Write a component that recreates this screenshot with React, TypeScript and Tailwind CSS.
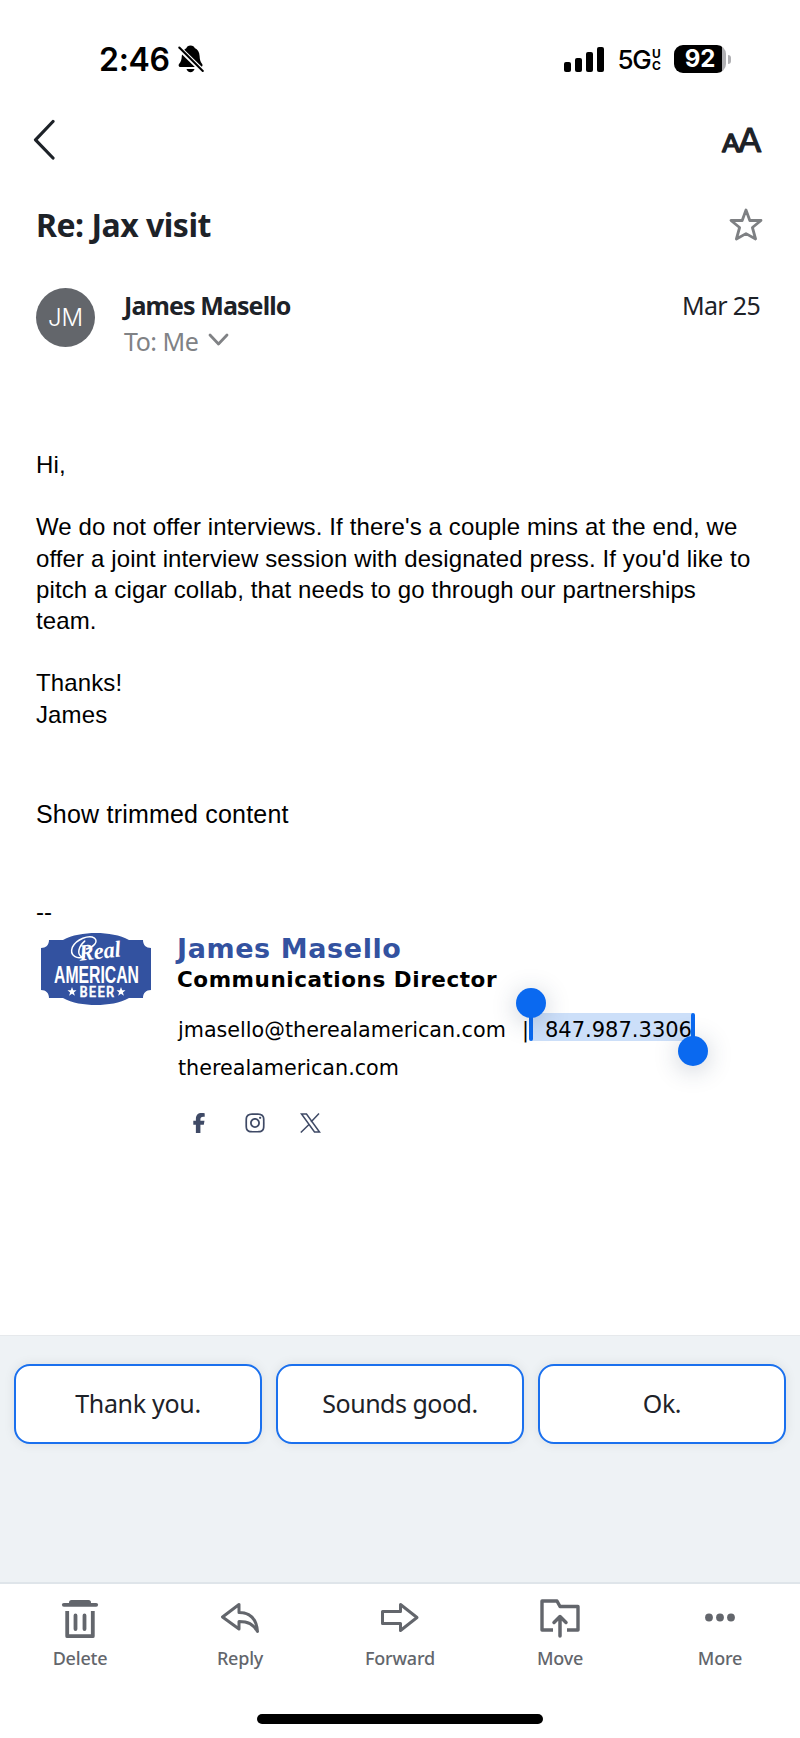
import React from 'react';
import { FaFacebookF, FaInstagram } from 'react-icons/fa6';

const quickReplies = [
  { text: 'Thank you.', tracking: 'tracking-[-0.3px]' },
  { text: 'Sounds good.', tracking: 'tracking-[-0.5px]' },
  { text: 'Ok.', tracking: 'tracking-[-0.4px]' },
];

const actions = [
  { label: 'Delete', icon: <TrashIcon /> },
  { label: 'Reply', icon: <ReplyIcon /> },
  { label: 'Forward', icon: <ForwardIcon /> },
  { label: 'Move', icon: <MoveIcon /> },
  { label: 'More', icon: <MoreIcon /> },
];

function BellOffIcon() {
  return (
    <svg width="26" height="28" viewBox="0 0 26 28">
      <path
        d="M12.5 0.500c2.300 0 3.800 1.200 4.200 2.600 3 1.300 4.700 3.900 4.900 7.900.2 4 .8 5.700 2.400 7.700 1 1.200.6 3.200-1 3.200H2.200c-1.600 0-2.100-1.900-1-3.200C3 16.700 3.600 15 3.800 11c.2-3.500 1.700-6.100 4.700-7.900C8.900 1.700 10.200.5 12.500.5z"
        fill="#000"
      />
      <path d="M8.500 24h8c-.5 2-2 3.200-4 3.200s-3.500-1.200-4-3.200z" fill="#000" />
      <path d="M.5 2.500 25 26.500" stroke="#fff" strokeWidth="5" />
      <path d="M1.300 2.500 24.800 26" stroke="#000" strokeWidth="2" strokeLinecap="round" />
    </svg>
  );
}

function SignalIcon() {
  return (
    <svg width="40" height="25" viewBox="0 0 40 25" fill="#000">
      <rect x="0" y="15" width="7" height="10" rx="2" />
      <rect x="11" y="11" width="7" height="14" rx="2" />
      <rect x="22" y="5" width="7" height="20" rx="2" />
      <rect x="33" y="0" width="7" height="25" rx="2" />
    </svg>
  );
}

function Battery() {
  return (
    <div className="flex items-center">
      <div className="flex h-[28px] w-[52px] items-center overflow-hidden rounded-[9px] bg-[linear-gradient(to_right,#000_48px,#b0b0b3_48px)]">
        <span className="w-[52px] text-center font-['Inter'] text-[24px] leading-none font-bold text-white">92</span>
      </div>
      <div className="ml-[2px] h-[9px] w-[3px] rounded-r-full bg-[#b0b0b3]" />
    </div>
  );
}

function StatusBar() {
  return (
    <div className="flex h-[118px] items-center justify-between pr-[69px] pl-[99px]">
      <div className="flex items-center">
        <span className="w-[79px] pt-[2px] font-['Inter'] text-[32px] leading-none font-semibold tracking-[-0.3px] text-black">
          2:46
        </span>
        <BellOffIcon />
      </div>
      <div className="flex items-center">
        <SignalIcon />
        <span className="ml-[14px] pt-[2px] font-['Inter'] text-[26px] leading-none font-medium tracking-[-1.500px] text-black">
          5G
        </span>
        <span className="mr-[13px] ml-[2px] flex flex-col pt-[2px] font-['Inter'] text-[12px] leading-[12px] font-bold text-black">
          <span>U</span>
          <span>C</span>
        </span>
        <Battery />
      </div>
    </div>
  );
}

function NavBar() {
  return (
    <div className="flex h-[62px] justify-between pr-[38px] pl-[32px]">
      <svg width="24" height="42" viewBox="0 0 24 42" fill="none">
        <path d="M21 3.500 3.500 21.800 21 40" stroke="#1d2228" strokeWidth="3.200" strokeLinecap="round" strokeLinejoin="round" />
      </svg>
      <svg
        width="42"
        height="42"
        viewBox="0 0 42 42"
        className="overflow-visible font-['Inter'] font-normal"
        fill="#1d2228"
        stroke="#1d2228"
        strokeLinejoin="round"
      >
        <text x="1.500" y="33.500" fontSize="24" strokeWidth="1.300" textLength="19" lengthAdjust="spacingAndGlyphs">A</text>
        <text x="17.500" y="33.500" fontSize="32" strokeWidth="1" textLength="24.500" lengthAdjust="spacingAndGlyphs">A</text>
      </svg>
    </div>
  );
}

function MessageHeader() {
  return (
    <>
      <div className="flex h-[90px] items-center justify-between pr-[37px] pl-[36px]">
        <h1 className="font-['Noto_Sans'] text-[32px] leading-none font-bold tracking-[-0.5px]">Re: Jax visit</h1>
        <svg width="34" height="33" viewBox="0 0 34 33" fill="none" className="mb-[2px]">
          <path
            d="M17 2 20.800 12.500H32L23.400 19.500 26.600 31 17 25.600 7.400 31l3.200-11.500L2 12.500H13.200z"
            stroke="#7e8083"
            strokeWidth="2.800"
            strokeLinejoin="round"
          />
        </svg>
      </div>
      <div className="flex h-[170px] pt-[17px] pr-[40px] pl-[36px]">
        <div className="mt-px flex size-[59px] items-center justify-center rounded-full bg-[#63666b] font-['Inter'] text-[24px] font-light text-white">
          JM
        </div>
        <div className="ml-[29px] flex-1 font-['Noto_Sans'] text-[25px]">
          <div className="leading-[36px] font-bold tracking-[-0.9px]">James Masello</div>
          <div className="flex items-center gap-[10px] leading-[36px] tracking-[-0.5px] text-[#808285]">
            To: Me
            <svg width="21" height="13" viewBox="0 0 21 13" fill="none" className="mb-[4px]">
              <path d="M2 2l8.500 9L19 2" stroke="#808285" strokeWidth="2.800" strokeLinecap="round" strokeLinejoin="round" />
            </svg>
          </div>
        </div>
        <div className="font-['Noto_Sans'] text-[25px] leading-[36px] tracking-[-0.7px]">Mar 25</div>
      </div>
    </>
  );
}

function MessageBody() {
  return (
    <div className="h-[481px] pl-[36px] font-['Liberation_Sans'] text-[24px] leading-[31.250px] tracking-[0.12px] whitespace-nowrap text-black">
      <p>Hi,</p>
      <p className="mt-[31px]">
        We do not offer interviews. If there's a couple mins at the end, we
        <br />
        offer a joint interview session with designated press. If you'd like to
        <br />
        pitch a cigar collab, that needs to go through our partnerships
        <br />
        team.
      </p>
      <p className="mt-[31px]">
        Thanks!
        <br />
        James
      </p>
      <p className="mt-[69px] text-[25px] tracking-[0.2px]">Show trimmed content</p>
      <p className="mt-[66px]">--</p>
    </div>
  );
}

function Logo() {
  return (
    <svg width="110" height="72" viewBox="0 0 110 72" fill="#fff" className="overflow-visible">
      <path
        d="M8 7H22C31 2 43 0 55 0s24 2 33 7h14c0 5 3 8 8 8v42c-5 0-8 3-8 8H88c-9 5-21 7-33 7s-24-2-33-7H8c0-5-3-8-8-8V15c5 0 8-3 8-8z"
        fill="#3352a0"
      />
      <g transform="rotate(-6 55 20)">
        <path
          d="M43 22C36 25 28 20 32 12 37 4 50 1 55 5 59 9 53 14 46 15M45 7c-7 5-9 12-5 15"
          fill="none"
          stroke="#fff"
          strokeWidth="1.500"
          strokeLinecap="round"
        />
        <text x="38" y="26" fontSize="23" textLength="42" lengthAdjust="spacingAndGlyphs" className="font-['Liberation_Serif'] font-bold italic">
          Real
        </text>
      </g>
      <text x="13" y="49.500" fontSize="24.500" textLength="85" lengthAdjust="spacingAndGlyphs" className="font-['Liberation_Sans'] font-bold">
        AMERICAN
      </text>
      <text
        x="38.500"
        y="63.500"
        fontSize="15"
        stroke="#fff"
        strokeWidth="0.600"
        textLength="34.500"
        lengthAdjust="spacing"
        className="font-['Roboto_Condensed','Roboto']"
      >
        BEER
      </text>
      <path d="M31 54l1.200 3.200h3.300l-2.600 2.200 1 3.300-2.900-1.900-2.900 1.900 1-3.300-2.600-2.200h3.300z" />
      <path d="M80 54l1.200 3.200h3.300l-2.600 2.200 1 3.300-2.900-1.900-2.900 1.900 1-3.300-2.600-2.200h3.300z" />
    </svg>
  );
}

function XIcon() {
  return (
    <svg width="21" height="20" viewBox="0 0 21 20" fill="none" stroke="#3f4a66" strokeWidth="1.500" className="ml-[34px]">
      <path d="M1.500 1h5l13 18h-5zM19 .5l-8 8.500M9 11.500.8 19.500" />
    </svg>
  );
}

function Signature() {
  return (
    <div className="flex h-[405px] pt-[3px] pl-[41px] font-['DejaVu_Sans'] whitespace-nowrap text-black">
      <Logo />
      <div className="ml-[26px]">
        <div className="text-[27px] leading-[32px] font-bold tracking-[0.6px] text-[#3352a0]">James Masello</div>
        <div className="text-[21.500px] leading-[30px] font-bold tracking-[0.55px]">Communications Director</div>
        <div className="mt-[18px] flex h-[28px] pl-px text-[20.700px] leading-[34px]">
          <span className="w-[344px]">jmasello@therealamerican.com</span>
          <span className="w-[9px]">|</span>
          <span className="relative h-[28px] w-[162px] bg-[#ccdff9] pl-[14px] text-[21px]">
            847.987.3306
            {/* Selection handles */}
            <span className="absolute top-0 left-[-2px] h-[28px] w-[4px] rounded-full bg-[#0a69f0]" />
            <span className="absolute top-[-25px] left-[-15px] size-[30px] rounded-full bg-[#0a69f0] shadow-[0_4px_24px_rgba(40,60,90,0.25)]" />
            <span className="absolute top-0 right-[-2px] h-[28px] w-[4px] rounded-full bg-[#0a69f0]" />
            <span className="absolute top-[23px] right-[-15px] size-[30px] rounded-full bg-[#0a69f0] shadow-[0_4px_24px_rgba(40,60,90,0.25)]" />
          </span>
        </div>
        <div className="mt-[12px] pl-px text-[20.700px] leading-[30px]">therealamerican.com</div>
        <div className="mt-[29px] flex items-center pl-[12px] text-[#3f4a66]">
          <FaFacebookF size={20} />
          <FaInstagram size={22} className="ml-[35px]" />
          <XIcon />
        </div>
      </div>
    </div>
  );
}

function QuickReplies() {
  return (
    <div className="h-[247px] border-t border-[#e6e9ec] bg-[#eef2f5] px-[14px] pt-[28px]">
      <div className="grid grid-cols-3 gap-[14px]">
        {quickReplies.map((reply) => (
          <button
            key={reply.text}
            className={`h-[80px] rounded-[16px] border-2 border-[#1a70ee] bg-white font-['Noto_Sans'] text-[25px] shadow-[0_0_12px_rgba(0,0,0,0.08)] ${reply.tracking}`}
          >
            {reply.text}
          </button>
        ))}
      </div>
    </div>
  );
}

function TrashIcon() {
  return (
    <svg width="42" height="40" viewBox="0 0 42 40" fill="none" stroke="#63666c">
      <path d="M10 5V3.500Q10 1 12.500 1h17Q32 1 32 3.500V5z" fill="#63666c" stroke="none" />
      <path d="M4.800 5.800h32.400" strokeWidth="3.800" strokeLinecap="round" />
      <path d="M8.200 12v25.200h25.600V12" strokeWidth="3.800" strokeLinejoin="round" />
      <path d="M16.500 16.500v13.500M25.500 16.500v13.500" strokeWidth="3.800" strokeLinecap="round" />
    </svg>
  );
}

function ReplyIcon() {
  return (
    <svg width="42" height="40" viewBox="0 0 42 40" fill="none" stroke="#63666c" strokeWidth="3" strokeLinejoin="round">
      <path d="M3.500 18 20 5.500v8C31 13.500 37.500 20 38.500 32.500 34 25 29 22.500 20 22.500v7.500z" />
    </svg>
  );
}

function ForwardIcon() {
  return (
    <svg width="42" height="40" viewBox="0 0 42 40" fill="none" stroke="#63666c" strokeWidth="3" strokeLinejoin="round">
      <path d="M3.500 12.500H21.500V5.500L38 18.500 21.500 31.500V24.500H3.500z" />
    </svg>
  );
}

function MoveIcon() {
  return (
    <svg width="42" height="40" viewBox="0 0 42 40" fill="none" stroke="#63666c" strokeWidth="3.400" strokeLinejoin="round">
      <path d="M14 31H3V2H18l3 5.500H39V31H28" />
      <path d="M21 37V18M15 23.500l6-6 6 6" strokeWidth="3.500" strokeLinecap="round" />
    </svg>
  );
}

function MoreIcon() {
  return (
    <svg width="42" height="40" viewBox="0 0 42 40" fill="#63666c">
      <circle cx="10" cy="18.500" r="3.900" />
      <circle cx="21" cy="18.500" r="3.900" />
      <circle cx="32" cy="18.500" r="3.900" />
    </svg>
  );
}

function ActionBar() {
  return (
    <div className="h-[156px] border-t-2 border-[#dfe5ea] bg-white">
      <div className="grid h-[130px] grid-cols-5 pt-[15px]">
        {actions.map((action) => (
          <div key={action.label} className="flex flex-col items-center">
            {action.icon}
            <span className="mt-[6px] font-['Noto_Sans'] text-[18px] leading-[26px] font-medium tracking-[-0.2px] text-[#63666c]">
              {action.label}
            </span>
          </div>
        ))}
      </div>
      <div className="mx-auto h-[10px] w-[286px] rounded-full bg-black" />
    </div>
  );
}

export default function App() {
  return (
    <div className="flex h-[1738px] w-[800px] flex-col overflow-hidden bg-white text-[#1d2228]">
      <StatusBar />
      <NavBar />
      <MessageHeader />
      <div className="h-[9px]" />
      <MessageBody />
      <Signature />
      <QuickReplies />
      <ActionBar />
    </div>
  );
}
